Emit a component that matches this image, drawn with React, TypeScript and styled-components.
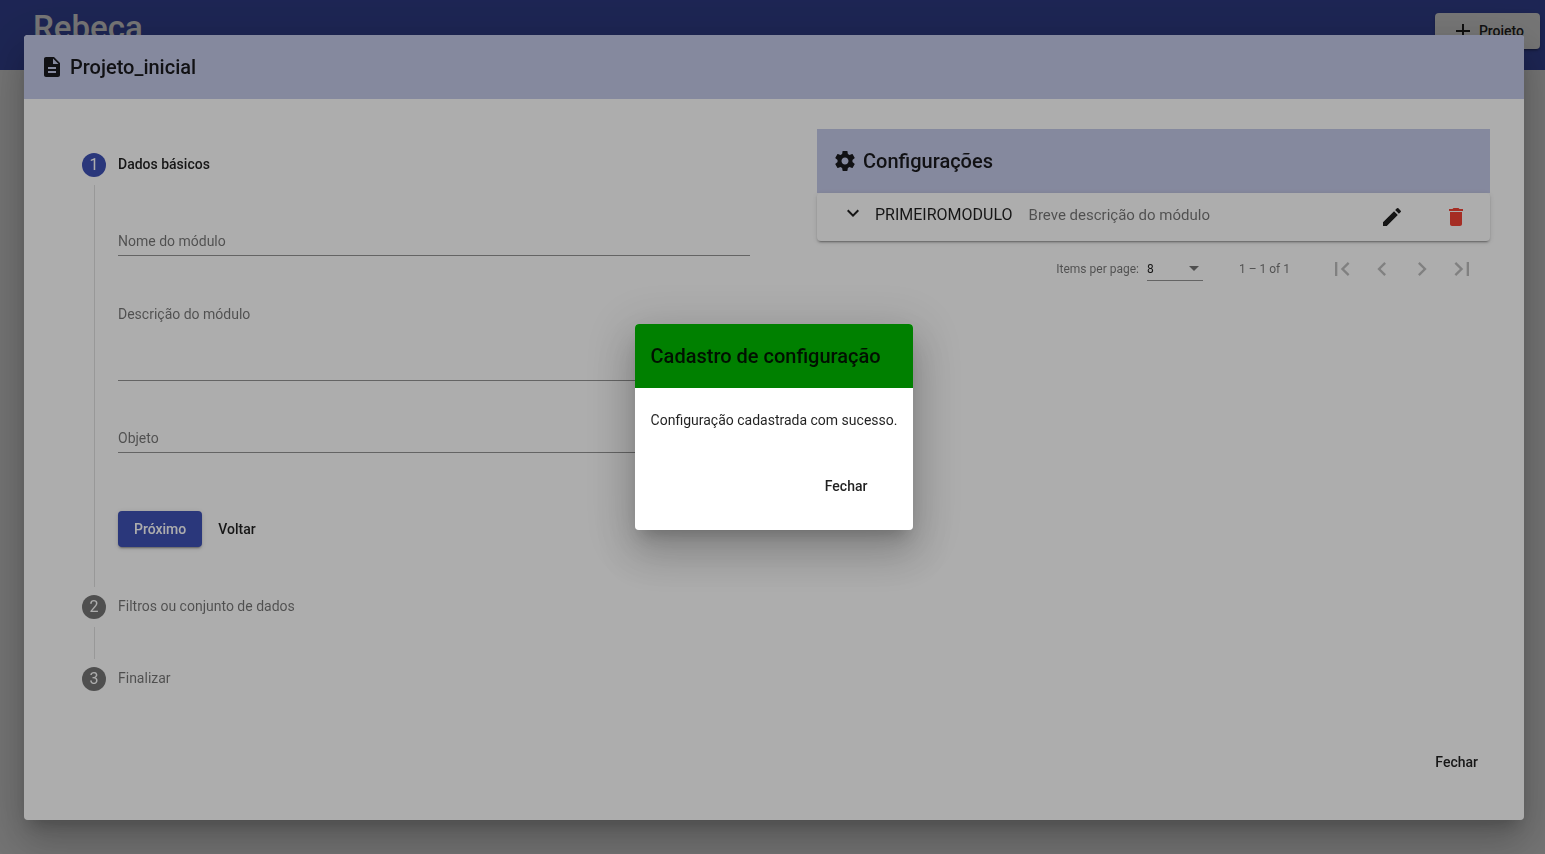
import React from 'react';
import styled, { createGlobalStyle, css } from 'styled-components';
import {
  MdAdd,
  MdChevronLeft,
  MdChevronRight,
  MdDelete,
  MdDescription,
  MdEdit,
  MdExpandMore,
  MdFirstPage,
  MdLastPage,
} from 'react-icons/md';

const ink = 'rgba(0, 0, 0, 0.87)';
const muted = 'rgba(0, 0, 0, 0.54)';
const primary = '#3f51b5';
const raised =
  '0 3px 1px -2px rgba(0,0,0,.2), 0 2px 2px 0 rgba(0,0,0,.14), 0 1px 5px 0 rgba(0,0,0,.12)';
const floating =
  '0 11px 15px -7px rgba(0,0,0,.2), 0 24px 38px 3px rgba(0,0,0,.14), 0 9px 46px 8px rgba(0,0,0,.12)';

const GlobalStyle = createGlobalStyle`
  *, *::before, *::after { box-sizing: border-box; }
  body {
    margin: 0;
    background: #fafafa;
    color: ${ink};
    font: 400 14px/20px Roboto, sans-serif;
  }
  h1, h2, p, ol { margin: 0; padding: 0; }
  button, input, textarea, select { font: inherit; color: inherit; }
  svg { display: block; flex: none; }
`;

const Page = styled.div`
  min-height: 100vh;
`;

const TopBar = styled.header`
  display: flex;
  align-items: flex-start;
  justify-content: space-between;
  height: 70px;
  padding: 13px 5px 0 33px;
  background: ${primary};
  color: #fff;
`;

const Brand = styled.h1`
  font-size: 33px;
  line-height: 30px;
  font-weight: 500;
`;

const Button = styled.button<{ $tone?: 'primary' | 'light' }>`
  display: inline-flex;
  align-items: center;
  gap: 4px;
  height: 36px;
  padding: 0 16px;
  border: 0;
  border-radius: 4px;
  background: transparent;
  font-weight: 500;
  color: ${ink};
  cursor: pointer;
  ${(p) =>
    p.$tone &&
    css`
      background: ${p.$tone === 'primary' ? primary : '#fff'};
      color: ${p.$tone === 'primary' ? '#fff' : ink};
      box-shadow: ${raised};
    `}
`;

const Backdrop = styled.div`
  position: fixed;
  inset: 0;
  display: grid;
  overflow: auto;
  background: rgba(0, 0, 0, 0.32);
`;

const ProjectBackdrop = styled(Backdrop)`
  padding: 35px 21px 34px 24px;
`;

const NoticeBackdrop = styled(Backdrop)`
  place-items: center;
  padding-left: 3px;
`;

const Dialog = styled.section`
  display: flex;
  flex-direction: column;
  overflow: hidden;
  border-radius: 4px;
  background: #fff;
`;

const Shadow = styled.div`
  display: grid;
  border-radius: 4px;
  box-shadow: ${floating};
`;

const Banner = styled.header<{ $color?: string }>`
  display: flex;
  align-items: center;
  gap: 6px;
  height: 64px;
  padding: 0 16px;
  background: ${(p) => p.$color || '#c5cae9'};
`;

const BannerTitle = styled.h2`
  font-size: 20px;
  line-height: 32px;
  font-weight: 500;
`;

const Columns = styled.div`
  display: grid;
  grid-template-columns: 716fr 673fr;
  gap: 43px;
  flex: 1;
  padding: 30px 34px 0;
`;

const Steps = styled.ol`
  list-style: none;
  padding: 24px;
`;

const Step = styled.li`
  display: grid;
  grid-template-columns: 24px 1fr;
  gap: 12px;
`;

const Rail = styled.div`
  display: flex;
  flex-direction: column;
  align-items: center;
`;

const StepNumber = styled.span<{ $active?: boolean }>`
  display: grid;
  place-items: center;
  width: 24px;
  height: 24px;
  border-radius: 50%;
  background: ${(p) => (p.$active ? primary : 'rgba(0, 0, 0, 0.54)')};
  color: #fff;
  font-size: 16px;
`;

const RailLine = styled.span`
  flex: 1;
  min-height: 32px;
  margin: 8px 0;
  border-left: 1px solid rgba(0, 0, 0, 0.12);
`;

const StepLabel = styled.div<{ $active?: boolean }>`
  height: 24px;
  line-height: 22px;
  color: ${(p) => (p.$active ? ink : muted)};
  font-weight: ${(p) => (p.$active ? 500 : 400)};
`;

const Form = styled.form`
  display: flex;
  flex-direction: column;
  gap: 45px;
  padding: 52px 0 48px;
`;

const fieldStyle = css`
  width: 100%;
  padding: 0 0 2px;
  border: 0;
  border-bottom: 1px solid rgba(0, 0, 0, 0.42);
  border-radius: 0;
  outline: 0;
  background: transparent;
  line-height: 24px;
  &::placeholder {
    color: ${muted};
    opacity: 1;
  }
`;

const TextField = styled.input`
  ${fieldStyle}
  height: 27px;
`;

const TextArea = styled.textarea`
  ${fieldStyle}
  display: block;
  height: 80px;
  padding-top: 1px;
  resize: none;
`;

const FormActions = styled.div`
  display: flex;
  padding-top: 13px;
`;

const PanelList = styled.div`
  display: flex;
  align-items: center;
  height: 48px;
  padding: 0 14px 0 24px;
  border-radius: 4px;
  box-shadow: ${raised};
`;

const Expander = styled.button`
  display: flex;
  align-items: flex-start;
  flex: 1;
  padding: 0 0 4px;
  border: 0;
  background: transparent;
  line-height: 28px;
  text-align: left;
`;

const ModuleName = styled.span`
  margin: 0 16px 0 10px;
  font-size: 16px;
`;

const ModuleText = styled.span`
  font-size: 15px;
  color: ${muted};
`;

const IconButton = styled.button`
  display: grid;
  place-items: center;
  width: 40px;
  height: 40px;
  padding: 0;
  border: 0;
  background: transparent;
  color: ${ink};
  &:disabled {
    color: rgba(0, 0, 0, 0.26);
  }
`;

const RowActions = styled.div`
  display: flex;
  gap: 24px;
`;

const Paginator = styled.nav`
  display: flex;
  align-items: center;
  justify-content: flex-end;
  height: 56px;
  padding-right: 8px;
  font-size: 12px;
  color: ${muted};
`;

const PageSize = styled.label`
  display: flex;
  align-items: center;
  gap: 8px;
`;

const SelectBox = styled.span`
  display: grid;
  grid-template-columns: 1fr 14px;
  align-items: center;
  width: 56px;
  border-bottom: 1px solid rgba(0, 0, 0, 0.42);
  color: ${muted};
  & > select,
  & > svg {
    grid-row: 1;
  }
  & > select {
    grid-column: 1 / 3;
  }
  & > svg {
    grid-column: 2;
    pointer-events: none;
  }
`;

const Select = styled.select`
  appearance: none;
  height: 22px;
  padding: 0;
  border: 0;
  background: transparent;
  color: ${ink};
`;

const Range = styled.span`
  margin: 0 32px 0 36px;
`;

const DialogFooter = styled.footer`
  display: flex;
  justify-content: flex-end;
  padding: 0 30px 40px;
`;

const NoticeText = styled.p`
  padding: 22px 16px 38px;
`;

const NoticeFooter = styled(DialogFooter)`
  padding-bottom: 26px;
`;

const laterSteps = ['Filtros ou conjunto de dados', 'Finalizar'];

function GearIcon() {
  return (
    <svg width="24" height="24" viewBox="0 0 24 24" fill="currentColor" aria-hidden="true">
      <path d="M19.43 12.98c.04-.32.07-.64.07-.98s-.03-.66-.07-.98l2.11-1.65c.19-.15.24-.42.12-.64l-2-3.46c-.12-.22-.39-.3-.61-.22l-2.49 1c-.52-.4-1.08-.73-1.69-.98l-.38-2.65C14.46 2.18 14.25 2 14 2h-4c-.25 0-.46.18-.49.42l-.38 2.65c-.61.25-1.17.59-1.69.98l-2.49-1c-.23-.09-.49 0-.61.22l-2 3.46c-.13.22-.07.49.12.64l2.11 1.65c-.04.32-.07.65-.07.98s.03.66.07.98l-2.11 1.65c-.19.15-.24.42-.12.64l2 3.46c.12.22.39.3.61.22l2.49-1c.52.4 1.08.73 1.69.98l.38 2.65c.03.24.24.42.49.42h4c.25 0 .46-.18.49-.42l.38-2.65c.61-.25 1.17-.59 1.69-.98l2.49 1c.23.09.49 0 .61-.22l2-3.46c.12-.22.07-.49-.12-.64l-2.11-1.65zM12 15.500c-1.930 0-3.500-1.570-3.500-3.500s1.570-3.500 3.500-3.500 3.500 1.570 3.500 3.500-1.570 3.500-3.500 3.500z" />
    </svg>
  );
}

function Stepper() {
  return (
    <Steps>
      <Step>
        <Rail>
          <StepNumber $active>1</StepNumber>
          <RailLine />
        </Rail>
        <div>
          <StepLabel $active>Dados básicos</StepLabel>
          <Form onSubmit={(e) => e.preventDefault()}>
            <TextField aria-label="Nome do módulo" placeholder="Nome do módulo" />
            <TextArea aria-label="Descrição do módulo" placeholder="Descrição do módulo" />
            <TextField aria-label="Objeto" placeholder="Objeto" />
            <FormActions>
              <Button type="submit" $tone="primary">Próximo</Button>
              <Button type="button">Voltar</Button>
            </FormActions>
          </Form>
        </div>
      </Step>
      {laterSteps.map((label, i) => (
        <Step key={label}>
          <Rail>
            <StepNumber>{i + 2}</StepNumber>
            {i < laterSteps.length - 1 && <RailLine />}
          </Rail>
          <StepLabel>{label}</StepLabel>
        </Step>
      ))}
    </Steps>
  );
}

function Settings() {
  return (
    <div>
      <Banner>
        <GearIcon />
        <BannerTitle>Configurações</BannerTitle>
      </Banner>
      <PanelList>
        <Expander type="button">
          <MdExpandMore size={24} />
          <ModuleName>PRIMEIROMODULO</ModuleName>
          <ModuleText>Breve descrição do módulo</ModuleText>
        </Expander>
        <RowActions>
          <IconButton aria-label="Editar">
            <MdEdit size={24} />
          </IconButton>
          <IconButton aria-label="Excluir">
            <MdDelete size={24} color="#f44336" />
          </IconButton>
        </RowActions>
      </PanelList>
      <Paginator>
        <PageSize>
          Items per page:
          <SelectBox>
            <Select defaultValue="8">
              <option>8</option>
            </Select>
            <svg width="10" height="5" viewBox="0 0 10 5" fill="currentColor">
              <path d="M0 0h10L5 5z" />
            </svg>
          </SelectBox>
        </PageSize>
        <Range>1 – 1 of 1</Range>
        <IconButton disabled aria-label="First page"><MdFirstPage size={28} /></IconButton>
        <IconButton disabled aria-label="Previous page"><MdChevronLeft size={28} /></IconButton>
        <IconButton disabled aria-label="Next page"><MdChevronRight size={28} /></IconButton>
        <IconButton disabled aria-label="Last page"><MdLastPage size={28} /></IconButton>
      </Paginator>
    </div>
  );
}

export default function App() {
  return (
    <Page>
      <GlobalStyle />
      <TopBar>
        <Brand>Rebeca</Brand>
        <Button $tone="light">
          <MdAdd size={24} />
          Projeto
        </Button>
      </TopBar>
      <ProjectBackdrop>
        <Shadow>
          <Dialog role="dialog">
            <Banner>
              <MdDescription size={24} />
              <BannerTitle>Projeto_inicial</BannerTitle>
            </Banner>
            <Columns>
              <Stepper />
              <Settings />
            </Columns>
            <DialogFooter>
              <Button>Fechar</Button>
            </DialogFooter>
          </Dialog>
        </Shadow>
      </ProjectBackdrop>
      <NoticeBackdrop>
        <Shadow>
          <Dialog role="alertdialog">
            <Banner $color="green">
              <BannerTitle>Cadastro de configuração</BannerTitle>
            </Banner>
            <NoticeText>Configuração cadastrada com sucesso.</NoticeText>
            <NoticeFooter>
              <Button>Fechar</Button>
            </NoticeFooter>
          </Dialog>
        </Shadow>
      </NoticeBackdrop>
    </Page>
  );
}
